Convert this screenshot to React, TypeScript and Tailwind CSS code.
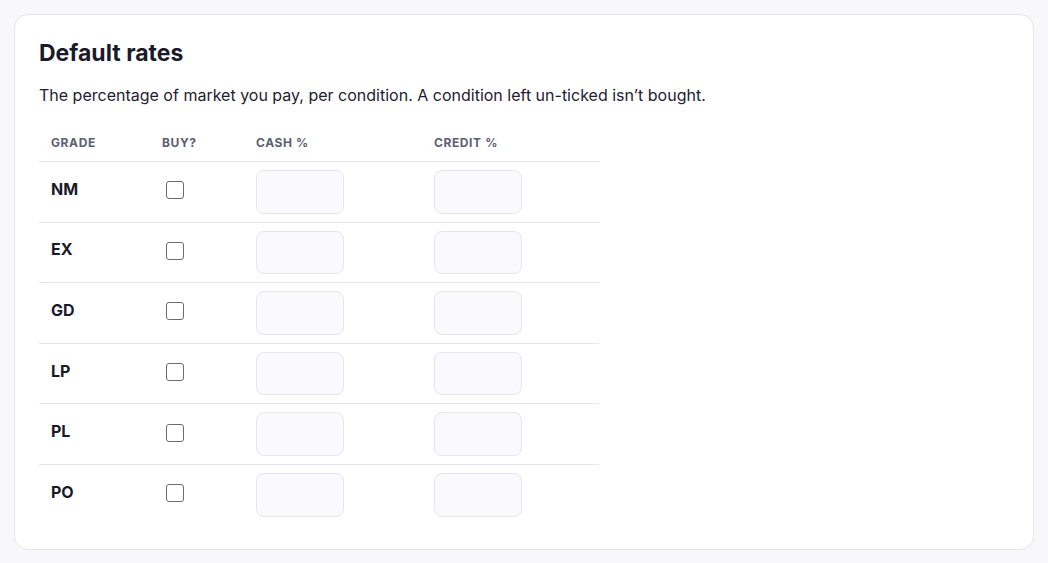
const grades = ["NM", "EX", "GD", "LP", "PL", "PO"];

export default function App() {
  return (
    <div
      className="min-h-screen bg-[#f8f8fb] p-[14px]"
      style={{ fontFamily: "Inter, 'Liberation Sans', sans-serif" }}
    >
      <div className="rounded-[14px] border border-[#e4e4ec] bg-white px-6 pb-6 pt-[24px]">
        <h2 className="text-[23px] font-bold leading-[28px] text-[#1a1b2a]">
          Default rates
        </h2>
        <p className="mt-[16px] text-[16px] leading-[24px] text-[#1f2130]">
          The percentage of market you pay, per condition. A condition left un-ticked isn’t bought.
        </p>

        <table className="mt-[21px] w-[560px] border-collapse text-left">
          <thead>
            <tr className="border-b border-[#e6e6ee]">
              <th className="w-[111px] px-3 pb-[10px] pt-[7px] text-[12px] font-bold leading-[16px] tracking-[0.6px] text-[#5b6072]">
                GRADE
              </th>
              <th className="w-[94px] px-3 pb-[10px] pt-[7px] text-[12px] font-bold leading-[16px] tracking-[0.6px] text-[#5b6072]">
                BUY?
              </th>
              <th className="w-[178px] px-3 pb-[10px] pt-[7px] text-[12px] font-bold leading-[16px] tracking-[0.6px] text-[#5b6072]">
                CASH %
              </th>
              <th className="px-3 pb-[10px] pt-[7px] text-[12px] font-bold leading-[16px] tracking-[0.6px] text-[#5b6072]">
                CREDIT %
              </th>
            </tr>
          </thead>
          <tbody>
            {grades.map((g, i) => (
              <tr
                key={g}
                className={i < grades.length - 1 ? "border-b border-[#e6e6ee]" : ""}
              >
                <td className="px-3 pb-[11px] pt-[5px] text-[16px] font-bold text-[#1a1b2a]">{g}</td>
                <td className="px-3 py-2">
                  <span className="-mt-[3px] ml-[4px] block h-[18px] w-[18px] rounded-[3px] border border-[#6b6b6b] bg-white" />
                </td>
                <td className="px-3 py-2">
                  <input className="block h-[43.6px] w-[88px] rounded-[8px] border border-[#e5e5ee] bg-[#fafafc] px-2 text-sm outline-none" />
                </td>
                <td className="px-3 py-2">
                  <input className="block h-[43.6px] w-[88px] rounded-[8px] border border-[#e5e5ee] bg-[#fafafc] px-2 text-sm outline-none" />
                </td>
              </tr>
            ))}
          </tbody>
        </table>
      </div>
    </div>
  );
}
